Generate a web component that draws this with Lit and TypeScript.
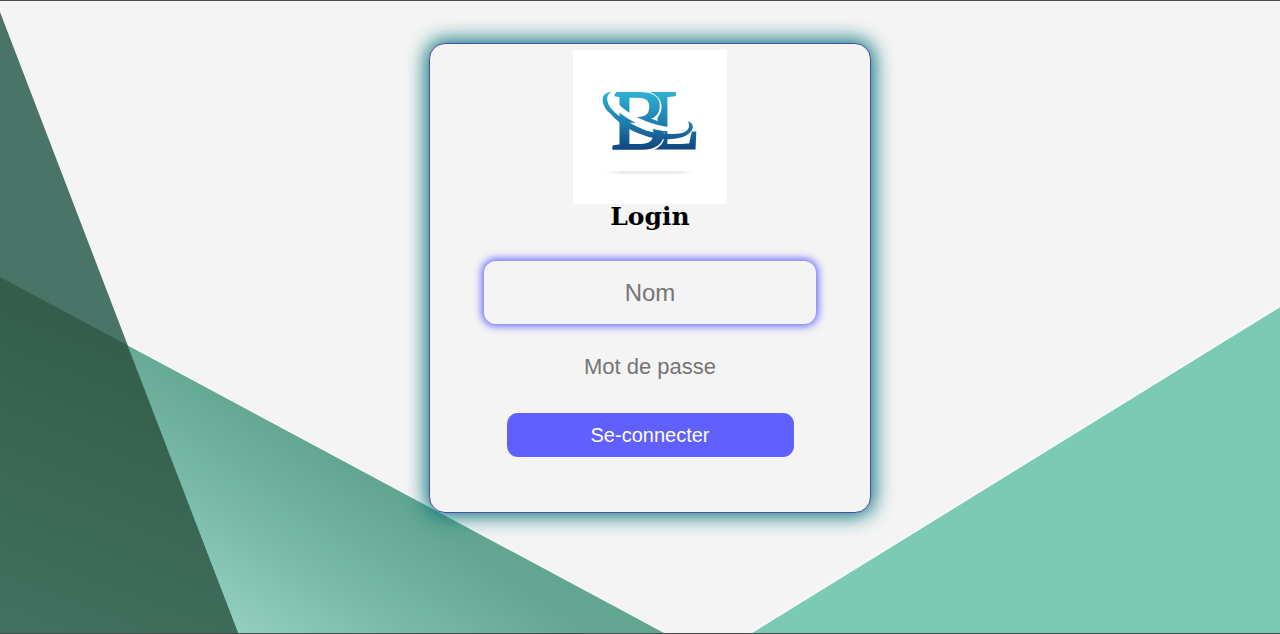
import { LitElement, html, css } from "lit";
import { customElement, state } from "lit/decorators.js";

@customElement("login-backdrop")
class LoginBackdrop extends LitElement {
  static styles = css`
    :host {
      display: block;
      min-width: 0;
      min-height: 0;
      contain: size;
    }
    svg {
      display: block;
      width: 100%;
      height: 100%;
    }
  `;

  render() {
    return html`
      <svg viewBox="0 0 1280 632" preserveAspectRatio="none" aria-hidden="true">
        <defs>
          <linearGradient id="mint" gradientUnits="userSpaceOnUse" x1="320" y1="447" x2="204" y2="620">
            <stop offset="0" stop-color="#62a691" />
            <stop offset="0.5" stop-color="#7ab9a8" />
            <stop offset="1" stop-color="#95d1c1" />
          </linearGradient>
          <linearGradient id="forest" gradientUnits="userSpaceOnUse" x1="90" y1="320" x2="-20" y2="600">
            <stop offset="0" stop-color="#345d4b" />
            <stop offset="1" stop-color="#40705f" />
          </linearGradient>
        </defs>
        <path d="M752 632 1280 306V632z" fill="#7acab4" />
        <path d="M750 632 1280 305" stroke="#f4faf8" stroke-width="2" />
        <path d="M0 276 664 632H0z" fill="url(#mint)" />
        <path d="M127 343 667 632" stroke="#f4faf8" stroke-width="1" />
        <path d="M0 11 238 632H0z" fill="#4a7467" />
        <path d="M0 276 127 344 238 632H0z" fill="url(#forest)" />
      </svg>
    `;
  }
}

@customElement("brand-logo")
class BrandLogo extends LitElement {
  static styles = css`
    :host {
      display: block;
      width: 154px;
      height: 154px;
      background: #fff;
    }
    svg {
      display: block;
      width: 100%;
      height: 100%;
    }
    .letter {
      font-family: "Liberation Serif", serif;
      font-size: 84px;
      fill: url(#blue);
      stroke: url(#blue);
      stroke-width: 2;
    }
  `;

  render() {
    return html`
      <svg viewBox="0 0 154 154" role="img" aria-label="BL">
        <defs>
          <linearGradient id="blue" gradientUnits="userSpaceOnUse" x1="0" y1="43" x2="0" y2="101">
            <stop offset="0" stop-color="#2cb0d3" />
            <stop offset="0.5" stop-color="#1f7fae" />
            <stop offset="1" stop-color="#0f427d" />
          </linearGradient>
          <linearGradient id="shade">
            <stop offset="0" stop-color="#fff" />
            <stop offset="0.2" stop-color="#ededed" />
            <stop offset="0.8" stop-color="#ededed" />
            <stop offset="1" stop-color="#fff" />
          </linearGradient>
        </defs>
        <ellipse cx="77" cy="122.500" rx="48" ry="1.800" fill="url(#shade)" />
        <text class="letter" x="76" y="99">L</text>
        <path
          d="M70 41C93 42 93 66 79 71C98 76 95 99 74 102H66V41z"
          fill="#fff"
        />
        <text class="letter" x="38" y="99">B</text>
        <path
          d="M41 42C34 44 33 50 40 56.500C56 72 78 81 100 81C110 80 115 77 115 70L110 74C107 78 100 78 92 77C74 74 56 65 46 55C40 49 39 45 45 40z"
          fill="#fff" stroke="#fff" stroke-width="1"
        />
        <path
          d="M39 42.300C28 41 26 54 37 63.300C42 69 46 72 50 75C57 80 64 83 70 85C80 89 90 90 99 89C111 88 118 84 119.700 78C120.500 75 118 72 115 71.500C118 77 115 81 109 83C99 85 85 84 73 80.500C64 77 57 73 50 68.500C44 65 40 61 37 57C33 51 33 44 39 42.300z"
          fill="url(#blue)"
        />
      </svg>
    `;
  }
}

@customElement("app-root")
class AppRoot extends LitElement {
  static styles = css`
    :host {
      display: block;
      font-family: "Liberation Sans", Arial, sans-serif;
    }
    .page {
      box-sizing: border-box;
      display: grid;
      min-height: 100vh;
      border-top: 1px solid #4a4a4c;
      border-bottom: 1px solid #4a4a4c;
      background: #f4f4f4;
    }
    .backdrop,
    .content {
      grid-area: 1 / 1;
    }
    .content {
      z-index: 1;
      display: flex;
      justify-content: center;
      align-items: flex-start;
      padding: 42px 0 42px 20px;
    }
    .card {
      box-sizing: border-box;
      display: flex;
      flex-direction: column;
      align-items: center;
      width: 100%;
      max-width: 442px;
      padding: 6px 54px 55px;
      border: 1px solid #4c4ca8;
      border-radius: 16px;
      background: #f4f4f4;
      box-shadow: 0 0 20px 3px #00707a;
    }
    h1 {
      margin: 0;
      font: 700 25px/26px Rockwell, "DejaVu Serif", serif;
      color: #000;
    }
    form {
      display: flex;
      flex-direction: column;
      align-items: center;
      width: 100%;
      margin-top: 31px;
    }
    .field {
      width: 100%;
    }
    input {
      box-sizing: border-box;
      display: block;
      width: 100%;
      margin: 0;
      padding: 0;
      border: 0;
      border-radius: 12px;
      outline: 0;
      background: transparent;
      font-family: inherit;
      text-align: center;
      color: #333;
    }
    input::placeholder {
      color: #757575;
      opacity: 1;
    }
    .name {
      height: 63px;
      font-size: 24px;
      box-shadow: 0 0 8px 2px #6060ff;
      background: #f4f4f4;
    }
    .password {
      height: 44px;
      margin-top: 21px;
      font-size: 22px;
    }
    button {
      width: 287px;
      max-width: 100%;
      height: 44px;
      margin-top: 24px;
      padding: 0;
      border: 0;
      border-radius: 11px;
      background: #6060ff;
      color: #fff;
      font-family: inherit;
      font-size: 20px;
      cursor: pointer;
    }
  `;

  @state() private name = "";
  @state() private password = "";

  private submit(event: Event) {
    event.preventDefault();
  }

  render() {
    return html`
      <div class="page">
        <login-backdrop class="backdrop"></login-backdrop>
        <main class="content">
          <section class="card">
            <brand-logo></brand-logo>
            <h1>Login</h1>
            <form @submit=${this.submit}>
              <label class="field">
                <input
                  class="name" type="text" placeholder="Nom" aria-label="Nom"
                  .value=${this.name}
                  @input=${(e: Event) => (this.name = (e.target as HTMLInputElement).value)}
                />
              </label>
              <label class="field">
                <input
                  class="password" type="password" placeholder="Mot de passe" aria-label="Mot de passe"
                  .value=${this.password}
                  @input=${(e: Event) => (this.password = (e.target as HTMLInputElement).value)}
                />
              </label>
              <button type="submit">Se-connecter</button>
            </form>
          </section>
        </main>
      </div>
    `;
  }
}
